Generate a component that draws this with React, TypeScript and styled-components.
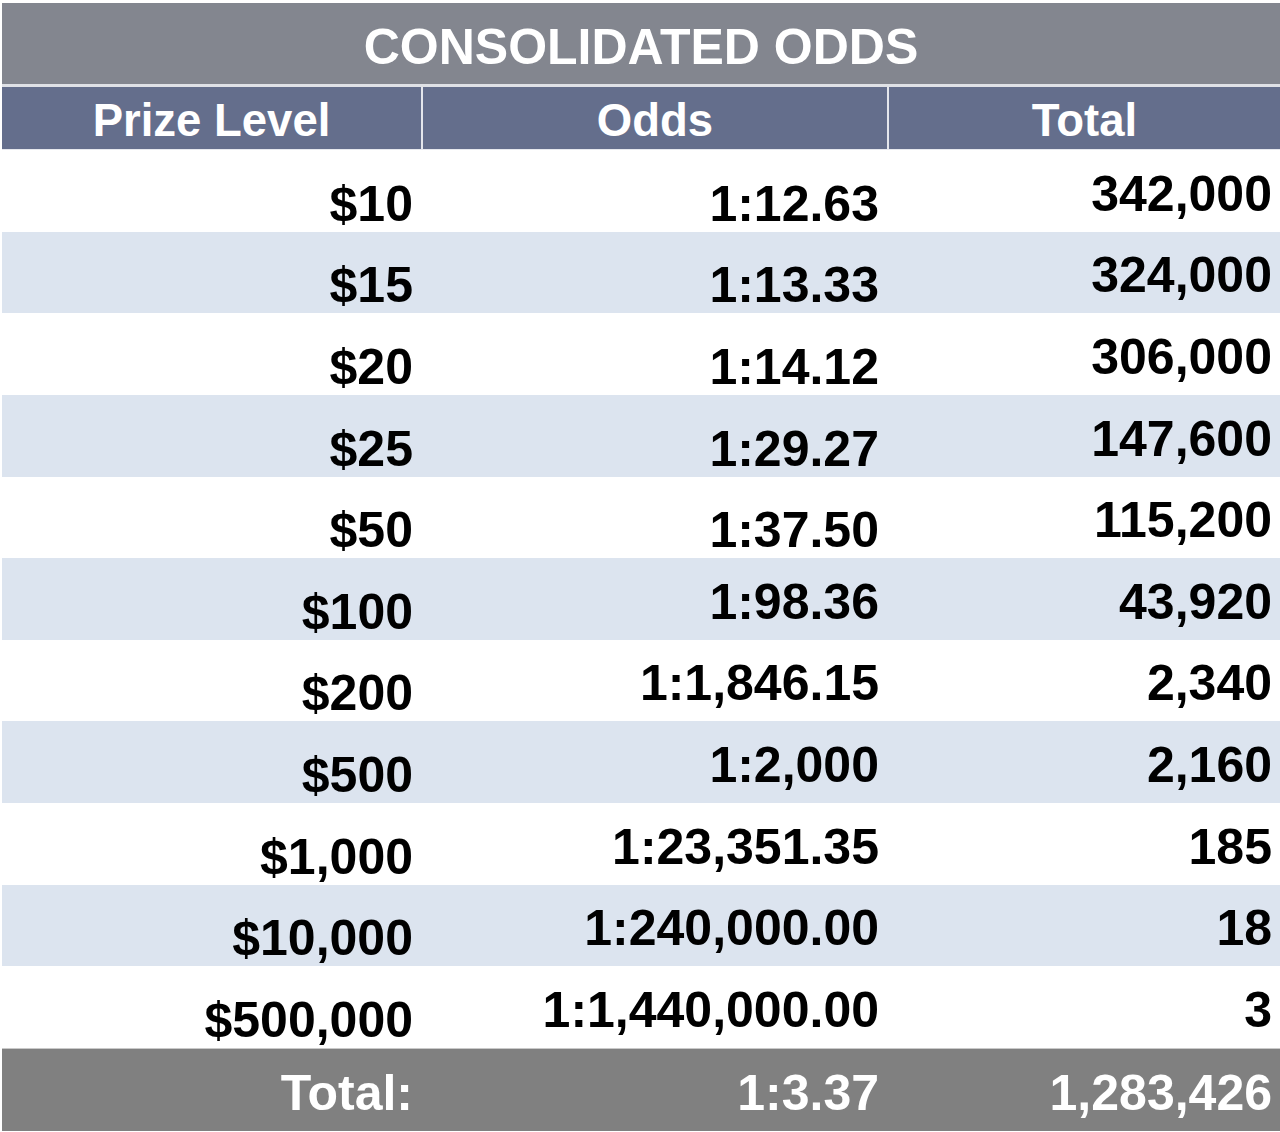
import { createGlobalStyle } from "styled-components";
import styled from "styled-components";

const GlobalStyle = createGlobalStyle`
  html, body {
    margin: 0;
    padding: 0;
    background: #ffffff;
  }
  body {
    font-family: "Liberation Sans", Arial, sans-serif;
  }
`;

const Page = styled.div`
  padding: 3px 0 0 2px;
`;

const Table = styled.div`
  width: 1278px;
  display: flex;
  flex-direction: column;
`;

const Title = styled.div`
  height: 84px;
  background: #83868f;
  color: #ffffff;
  font-size: 50px;
  font-weight: 700;
  display: flex;
  align-items: flex-end;
  justify-content: center;
  padding-bottom: 12px;
  box-sizing: border-box;
  line-height: 1;
  border-bottom: 3px solid #dfe1e6;
`;

const HeaderRow = styled.div`
  display: grid;
  grid-template-columns: 419px 464px 1fr;
  column-gap: 2px;
  background: #e4e6ec;
  border-bottom: 1px solid #e6e8ee;
`;

const HeaderCell = styled.div`
  height: 62px;
  background: #646e8c;
  color: #ffffff;
  font-size: 45.5px;
  font-weight: 700;
  line-height: 1;
  display: flex;
  align-items: flex-end;
  justify-content: center;
  padding-bottom: 6px;
  box-sizing: border-box;
`;

const Row = styled.div<{ $shaded: boolean }>`
  display: grid;
  grid-template-columns: 421px 466px 1fr;
  height: 81.64px;
  background: ${(p) => (p.$shaded ? "#dce4ef" : "#ffffff")};
`;

const TotalRow = styled.div`
  display: grid;
  grid-template-columns: 421px 466px 1fr;
  height: 82px;
  background: #808080;
  border-top: 1px solid #c9c9c9;
  color: #ffffff;
`;

const Cell = styled.div<{ $raised?: boolean; $last?: boolean }>`
  display: flex;
  align-items: flex-end;
  justify-content: flex-end;
  padding-right: ${(p) => (p.$last ? "8px" : "10px")};
  padding-bottom: ${(p) => (p.$raised ? "13px" : "3px")};
  font-size: 50px;
  font-weight: 700;
  line-height: 1;
  white-space: nowrap;
`;

interface PrizeRow {
  prize: string;
  odds: string;
  total: string;
  oddsRaised: boolean;
}

const rows: PrizeRow[] = [
  { prize: "$10", odds: "1:12.63", total: "342,000", oddsRaised: false },
  { prize: "$15", odds: "1:13.33", total: "324,000", oddsRaised: false },
  { prize: "$20", odds: "1:14.12", total: "306,000", oddsRaised: false },
  { prize: "$25", odds: "1:29.27", total: "147,600", oddsRaised: false },
  { prize: "$50", odds: "1:37.50", total: "115,200", oddsRaised: false },
  { prize: "$100", odds: "1:98.36", total: "43,920", oddsRaised: true },
  { prize: "$200", odds: "1:1,846.15", total: "2,340", oddsRaised: true },
  { prize: "$500", odds: "1:2,000", total: "2,160", oddsRaised: true },
  { prize: "$1,000", odds: "1:23,351.35", total: "185", oddsRaised: true },
  { prize: "$10,000", odds: "1:240,000.00", total: "18", oddsRaised: true },
  { prize: "$500,000", odds: "1:1,440,000.00", total: "3", oddsRaised: true },
];

const App = () => {
  return (
    <>
      <GlobalStyle />
      <Page>
        <Table>
          <Title>CONSOLIDATED ODDS</Title>
          <HeaderRow>
            <HeaderCell>Prize Level</HeaderCell>
            <HeaderCell>Odds</HeaderCell>
            <HeaderCell>Total</HeaderCell>
          </HeaderRow>
          {rows.map((r, i) => (
            <Row key={r.prize} $shaded={i % 2 === 1}>
              <Cell>{r.prize}</Cell>
              <Cell $raised={r.oddsRaised}>{r.odds}</Cell>
              <Cell $raised $last>
                {r.total}
              </Cell>
            </Row>
          ))}
          <TotalRow>
            <Cell $raised>Total:</Cell>
            <Cell $raised>1:3.37</Cell>
            <Cell $raised $last>
              1,283,426
            </Cell>
          </TotalRow>
        </Table>
      </Page>
    </>
  );
};

export default App;
